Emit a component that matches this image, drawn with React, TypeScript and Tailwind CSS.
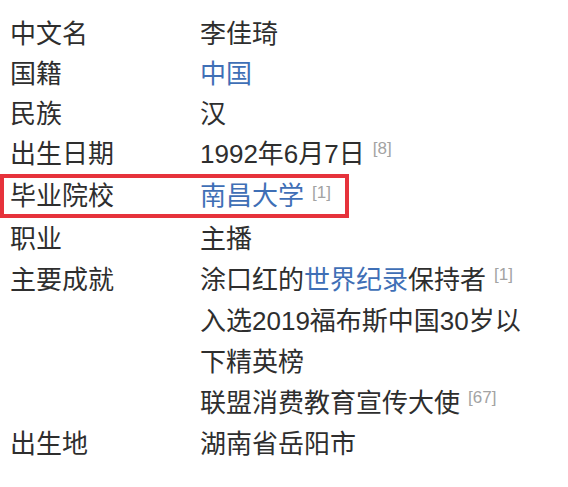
const Ref = ({ n }: { n: string }) => (
  <span className="ml-[8px] align-top text-[17px] leading-none text-[#a3a3a3] relative top-[6px]">[{n}]</span>
);

const Link = ({ children }: { children: React.ReactNode }) => (
  <span className="text-[#3f6fb6]">{children}</span>
);

type Row = { label: string; value: React.ReactNode; boxed?: boolean };

const top: Row[] = [
  { label: '中文名', value: '李佳琦' },
  { label: '国籍', value: <Link>中国</Link> },
  { label: '民族', value: '汉' },
  { label: '出生日期', value: <>1992年6月7日<Ref n="8" /></> },
];

const InfoRow = ({ label, value, lead }: { label: string; value: React.ReactNode; lead: string }) => (
  <div className={`flex pl-[10px] ${lead}`}>
    <div className="w-[190px] shrink-0">{label}</div>
    <div className="w-[340px]">{value}</div>
  </div>
);

export default function App() {
  return (
    <div
      className="w-[568px] h-[487px] bg-white pt-[14px] text-[26px] text-[#2e2e2e]"
      style={{ fontFamily: '"Liberation Sans", "Noto Sans CJK SC", sans-serif' }}
    >
      {top.map((r) => (
        <InfoRow key={r.label} label={r.label} value={r.value} lead="leading-[40px]" />
      ))}
      <div className="w-[349px] border-[4px] border-[#e6323b] flex pl-[6px] leading-[36px]">
        <div className="w-[190px] shrink-0">毕业院校</div>
        <div>
          <Link>南昌大学</Link>
          <Ref n="1" />
        </div>
      </div>
      <div className="mt-[1px]">
        <InfoRow label="职业" value="主播" lead="leading-[41px]" />
        <InfoRow
          label="主要成就"
          lead="leading-[41px]"
          value={
            <>
              <div>
                涂口红的<Link>世界纪录</Link>保持者<Ref n="1" />
              </div>
              <div>入选2019福布斯中国30岁以下精英榜</div>
              <div>
                联盟消费教育宣传大使<Ref n="67" />
              </div>
            </>
          }
        />
        <InfoRow label="出生地" value="湖南省岳阳市" lead="leading-[41px]" />
      </div>
    </div>
  );
}
